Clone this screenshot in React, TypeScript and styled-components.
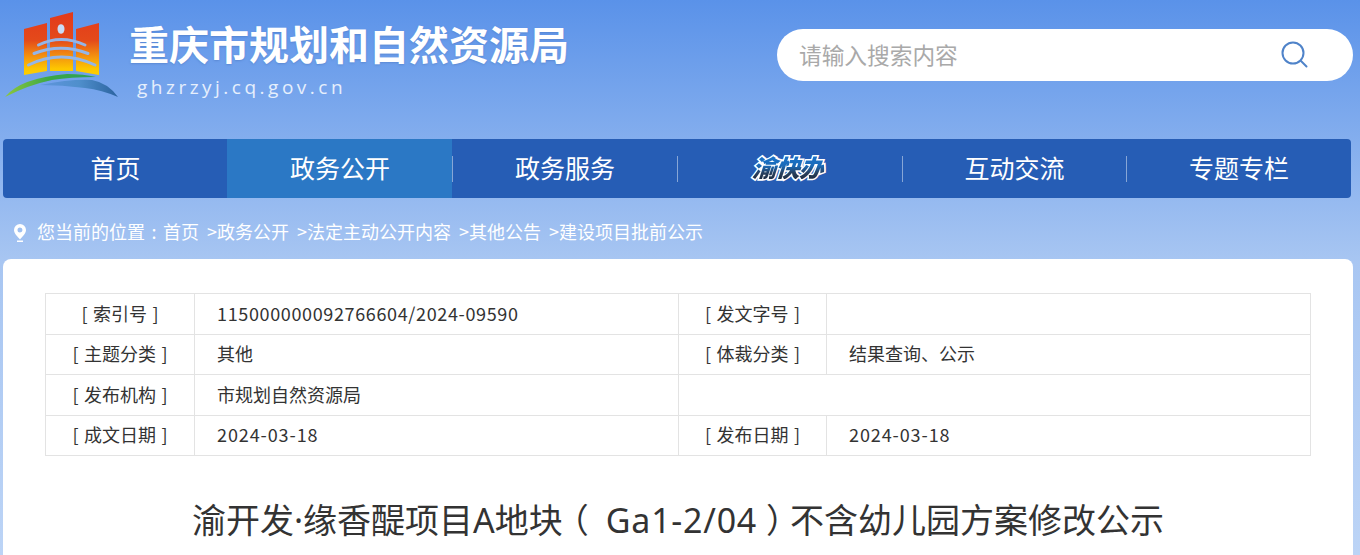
import styled, { createGlobalStyle } from "styled-components";

const cjk = `"Noto Sans CJK SC", "Noto Sans", sans-serif`;

const GlobalStyle = createGlobalStyle`
  html, body {
    margin: 0;
    height: 555px;
    overflow: hidden;
    background: #ffffff;
    font-family: ${cjk};
  }
`;

const Page = styled.div`
  width: 1360px;
  height: 555px;
  overflow: hidden;
  background: linear-gradient(180deg, #5a92e9 0%, #a8c6f2 262px, #bcd4f6 555px);
`;

const Header = styled.header`
  height: 139px;
  display: flex;
  justify-content: space-between;
  padding: 0 7px 0 4px;
  box-sizing: border-box;
`;

const Brand = styled.div`
  display: flex;
  align-items: flex-start;
`;

const BrandText = styled.div`
  display: flex;
  flex-direction: column;
  margin: 17px 0 0 7px;
`;

const SiteName = styled.div`
  font-size: 40px;
  line-height: 52px;
  font-weight: 700;
  color: #ffffff;
  text-shadow: 0 1px 2px rgba(60, 100, 170, 0.35);
`;

const Domain = styled.div`
  font-family: "Open Sans", sans-serif;
  font-size: 19px;
  line-height: 26px;
  letter-spacing: 3.5px;
  color: #e6effc;
  margin: 5px 0 0 8px;
`;

const SearchBox = styled.div`
  width: 576px;
  height: 52px;
  margin-top: 29px;
  border-radius: 26px;
  background: #ffffff;
  display: flex;
  align-items: center;
  justify-content: space-between;
  padding: 0 45px 2px 22px;
  box-sizing: border-box;
`;

const Placeholder = styled.span`
  font-size: 22.7px;
  color: #a9a9a9;
`;

const Nav = styled.nav`
  width: 1348px;
  height: 59px;
  margin-left: 3px;
  display: grid;
  grid-template-columns: 224px 225px 225px 225px 224px 225px;
  border-radius: 4px;
  overflow: hidden;
  background: #265db5;
`;

const NavItem = styled.div<{ $active?: boolean }>`
  position: relative;
  display: flex;
  align-items: center;
  justify-content: center;
  padding: 0 0 3px 1px;
  font-size: 25px;
  color: #ffffff;
  background: ${(p) => (p.$active ? "#2b78c5" : "transparent")};

  &:not(:last-child)::after {
    content: "";
    position: absolute;
    right: -1px;
    top: 17px;
    height: 26px;
    width: 1px;
    background: rgba(255, 255, 255, 0.45);
  }
`;

const FastLogo = styled.span`
  position: relative;
  font-size: 24px;
  line-height: 1;
  font-weight: 900;
  letter-spacing: -0.5px;
  color: #ffffff;
  -webkit-text-stroke: 3px #ffffff;
  transform: skewX(-18deg);

  &::after {
    content: "渝快办";
    position: absolute;
    left: 0;
    top: 0;
    -webkit-text-stroke: 0;
    color: transparent;
    background: linear-gradient(180deg, #1a74cc 0%, #1a6ab8 45%, #27405f 75%, #1e2d42 100%);
    -webkit-background-clip: text;
    background-clip: text;
  }
`;

const Crumbs = styled.div`
  height: 61px;
  display: flex;
  align-items: center;
  padding: 5px 0 0 13px;
  box-sizing: border-box;
  font-size: 18px;
  color: #ffffff;
  white-space: pre;
`;

const PinIcon = styled.svg`
  width: 14px;
  height: 20px;
  margin: 4px 10px 0 0;
`;

const Sep = styled.span<{ $center?: boolean }>`
  display: inline-block;
  width: 18px;
  text-align: ${(p) => (p.$center ? "center" : "right")};
`;

const Card = styled.main`
  width: 1350px;
  height: 320px;
  margin-left: 3px;
  padding: 34px 42px 0;
  box-sizing: border-box;
  background: #ffffff;
  border-radius: 8px 8px 0 0;
`;

const Table = styled.div`
  width: 1266px;
  display: grid;
  grid-template-columns: 149px 484px 148px 484px;
  grid-auto-rows: 40.5px;
  border-top: 1px solid #e3e3e3;
  border-left: 1px solid #e3e3e3;
  box-sizing: border-box;
`;

const Cell = styled.div<{ $label?: boolean; $tracking?: number; $span?: number }>`
  display: flex;
  align-items: center;
  justify-content: ${(p) => (p.$label ? "center" : "flex-start")};
  padding: 0 0 2px ${(p) => (p.$label ? "0" : "22px")};
  grid-column: span ${(p) => p.$span ?? 1};
  border-right: 1px solid #e3e3e3;
  border-bottom: 1px solid #e3e3e3;
  font-size: 18px;
  color: #333333;
  white-space: pre;
  word-spacing: ${(p) => (p.$label ? "1.5px" : "0")};
  letter-spacing: ${(p) => p.$tracking ?? 0}px;
`;

const Title = styled.h1`
  margin: 41px 0 0;
  text-align: center;
  font-family: "Noto Sans", "Noto Sans CJK SC", sans-serif;
  font-size: 34px;
  line-height: 46px;
  font-weight: 400;
  color: #333333;
  white-space: pre;
`;

const Paren = styled.span<{ $before: number; $after: number }>`
  font-feature-settings: "halt";
  margin: 0 ${(p) => p.$after}px 0 ${(p) => p.$before}px;
`;

const Code = styled.span`
  letter-spacing: 0.75px;
`;

const Logo = () => (
  <svg width="118" height="100" viewBox="0 0 118 100" style={{ flexShrink: 0 }}>
    <defs>
      <linearGradient id="fire" gradientUnits="userSpaceOnUse" x1="0" y1="12" x2="0" y2="75">
        <stop offset="0" stopColor="#e2391b" />
        <stop offset="0.45" stopColor="#e44a1a" />
        <stop offset="0.72" stopColor="#f4960f" />
        <stop offset="0.9" stopColor="#fdc600" />
        <stop offset="1" stopColor="#fdcf00" />
      </linearGradient>
      <linearGradient id="green" x1="0" y1="0" x2="1" y2="0">
        <stop offset="0" stopColor="#8cc63f" />
        <stop offset="0.5" stopColor="#3aa845" />
        <stop offset="1" stopColor="#2c9f60" />
      </linearGradient>
      <linearGradient id="blue" x1="0" y1="0" x2="1" y2="0">
        <stop offset="0" stopColor="#5f95dd" />
        <stop offset="0.5" stopColor="#4f8fcc" />
        <stop offset="1" stopColor="#2b639f" />
      </linearGradient>
    </defs>
    <g transform="translate(-4 0)">
      <path d="M24 29 L47 23 V71 L24 75 Z" fill="url(#fire)" />
      <path d="M50 18 L73 12 V71 H50 Z" fill="url(#fire)" />
      <path d="M76 29 L99 23 V75 L76 71 Z" fill="url(#fire)" />
      <ellipse cx="61" cy="29" rx="3.500" ry="4.800" fill="#c9dcf6" />
      <g fill="none" stroke="#94b6e8" strokeWidth="3" strokeLinecap="round">
        <path d="M38.500 45 Q61 34 85 45" />
        <path d="M34 53.500 Q61 43 88 53.500" />
        <path d="M28.500 65 Q61 49 95 65" />
      </g>
      <path d="M5 97 Q20 78 67 74 Q84 74 96 77 Q70 77 52 80 Q28 85 5 97 Z" fill="url(#green)" />
      <path d="M40 85 Q70 79 92 80 Q108 83 118 97 Q102 90 85 88 Q62 85 40 85 Z" fill="url(#blue)" />
    </g>
  </svg>
);

const App = () => (
  <>
    <GlobalStyle />
    <Page>
      <Header>
        <Brand>
          <Logo />
          <BrandText>
            <SiteName>重庆市规划和自然资源局</SiteName>
            <Domain>ghzrzyj.cq.gov.cn</Domain>
          </BrandText>
        </Brand>
        <SearchBox>
          <Placeholder>请输入搜索内容</Placeholder>
          <svg width="27" height="27" viewBox="0 0 27 27" fill="none" stroke="#4f83c9" strokeWidth="2">
            <circle cx="12" cy="12" r="10.500" />
            <path d="M20 20 L25.500 25.500" strokeLinecap="round" />
          </svg>
        </SearchBox>
      </Header>
      <Nav>
        <NavItem>首页</NavItem>
        <NavItem $active>政务公开</NavItem>
        <NavItem>政务服务</NavItem>
        <NavItem>
          <FastLogo>渝快办</FastLogo>
        </NavItem>
        <NavItem>互动交流</NavItem>
        <NavItem>专题专栏</NavItem>
      </Nav>
      <Crumbs>
        <PinIcon viewBox="0 0 14 20">
          <path
            fillRule="evenodd"
            fill="#ffffff"
            d="M7 1a6 6 0 0 1 6 6c0 3.500-3.500 6.500-6 9.500C4.500 13.500 1 10.500 1 7a6 6 0 0 1 6-6Zm0 3.500a2.500 2.500 0 1 0 0 5 2.500 2.500 0 0 0 0-5Z"
          />
          <rect x="4" y="17.500" width="6" height="1.500" fill="#ffffff" />
        </PinIcon>
        <span>
          您当前的位置<Sep $center>:</Sep>首页<Sep>&gt;</Sep>政务公开<Sep>&gt;</Sep>法定主动公开内容
          <Sep>&gt;</Sep>其他公告<Sep>&gt;</Sep>建设项目批前公示
        </span>
      </Crumbs>
      <Card>
        <Table>
          <Cell $label>[ 索引号 ]</Cell>
          <Cell $tracking={0.64}>115000000092766604/2024-09590</Cell>
          <Cell $label>[ 发文字号 ]</Cell>
          <Cell />
          <Cell $label>[ 主题分类 ]</Cell>
          <Cell>其他</Cell>
          <Cell $label>[ 体裁分类 ]</Cell>
          <Cell>结果查询、公示</Cell>
          <Cell $label>[ 发布机构 ]</Cell>
          <Cell>市规划自然资源局</Cell>
          <Cell $span={2} />
          <Cell $label>[ 成文日期 ]</Cell>
          <Cell $tracking={0.9}>2024-03-18</Cell>
          <Cell $label>[ 发布日期 ]</Cell>
          <Cell $tracking={0.9}>2024-03-18</Cell>
        </Table>
        <Title>
          渝开发·缘香醍项目A地块<Paren $before={9} $after={17}>（</Paren><Code>Ga1-2/04</Code><Paren $before={9} $after={7}>）</Paren>不含幼儿园方案修改公示
        </Title>
      </Card>
    </Page>
  </>
);

export default App;
